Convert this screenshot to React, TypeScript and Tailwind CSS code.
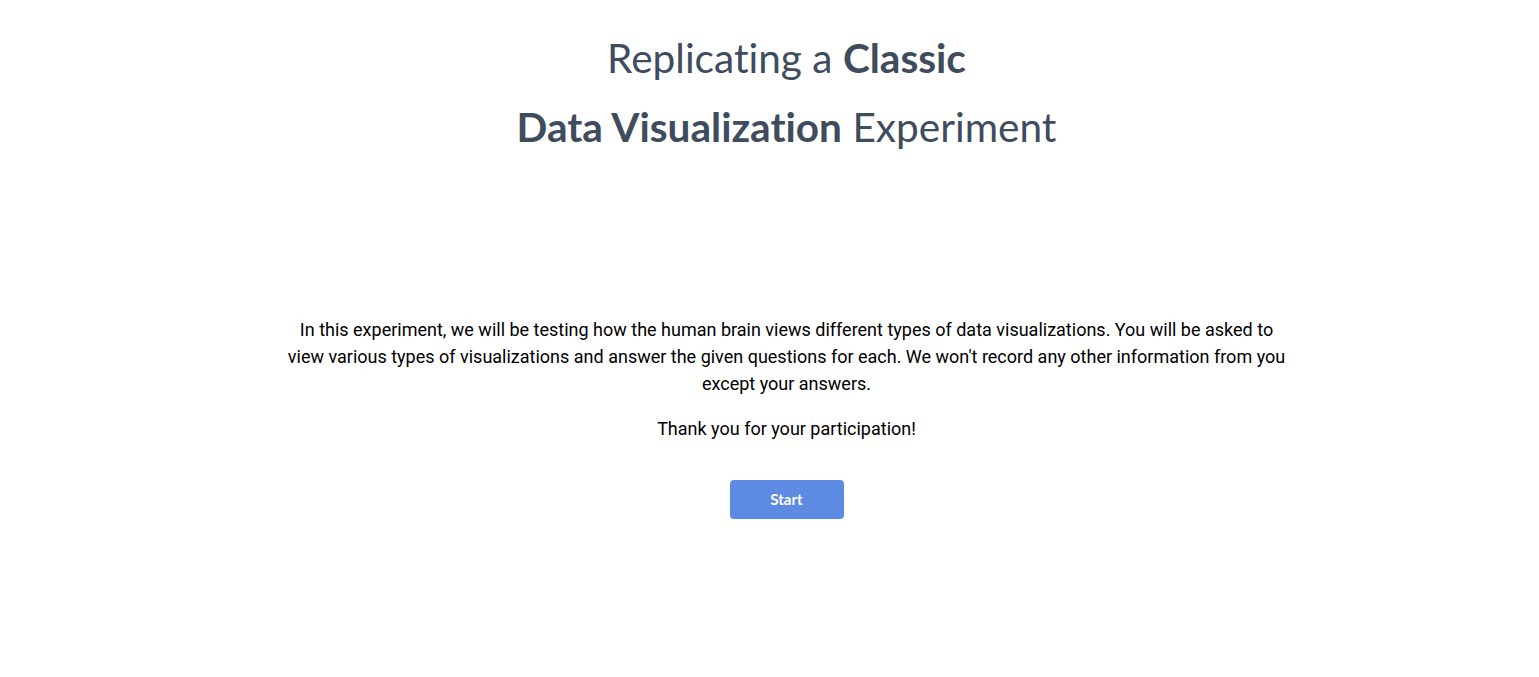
import React from "react";

const App = () => {
  return (
    <div className="min-h-screen bg-white flex flex-col items-center pl-[34px]">
      <h1 className="mt-[23px] text-center text-[40.6px] leading-[69px] text-[#3e4c5e] font-['Lato',sans-serif] font-normal [font-variant-ligatures:none]">
        Replicating a <span className="font-bold">Classic</span>
        <br />
        <span className="font-bold">Data Visualization</span> Experiment
      </h1>
      <div className="mt-[155px] w-[1000px] text-center text-[18px] leading-[27px] text-black font-['Roboto',sans-serif]">
        <p>
          In this experiment, we will be testing how the human brain views different types of data visualizations. You will be asked to view various types of visualizations and answer the given questions for each. We won't record any other information from you except your answers.
        </p>
        <p className="mt-[18px]">Thank you for your participation!</p>
      </div>
      <button className="mt-[38px] w-[114px] h-[39px] rounded-[4px] bg-[#5d8be3] text-white text-[15px] font-bold font-['Lato',sans-serif]">
        Start
      </button>
    </div>
  );
};

export default App;
